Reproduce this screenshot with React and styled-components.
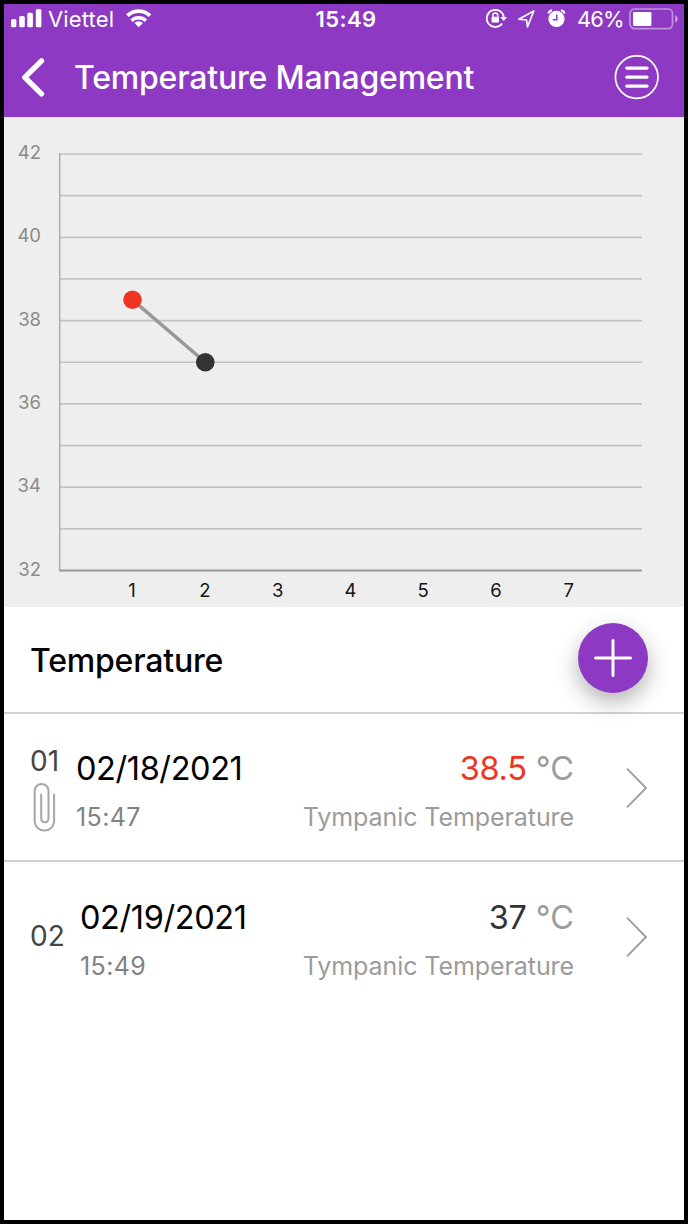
import React from "react";
import styled, { createGlobalStyle } from "styled-components";

const PURPLE = "#8d39c3";

const GlobalStyle = createGlobalStyle`
  * {
    box-sizing: border-box;
  }
  body {
    margin: 0;
    background: #fff;
    font-family: Inter, "Liberation Sans", sans-serif;
    font-kerning: normal;
  }
`;

const Screen = styled.div`
  display: flex;
  flex-direction: column;
  width: 688px;
  height: 1224px;
  border: 4px solid #000;
  background: #fff;
  overflow: hidden;
`;

const TopBar = styled.header`
  height: 113px;
  background: ${PURPLE};
  color: #fff;
`;

const StatusBar = styled.div`
  display: grid;
  grid-template-columns: 1fr auto 1fr;
  align-items: center;
  height: 30px;
  padding: 0 6px 0 7px;
  font-size: 22px;
  line-height: 30px;
`;

const StatusGroup = styled.div`
  display: flex;
  align-items: center;
  justify-content: ${props => (props.$end ? "flex-end" : "flex-start")};
  height: 30px;
`;

const Carrier = styled.span`
  width: 83px;
  padding-left: 6px;
  letter-spacing: 0.15px;
`;

const Clock = styled.span`
  padding-left: 3px;
  font-weight: 600;
  letter-spacing: 0.4px;
`;

const Percent = styled.span`
  width: 57px;
  padding-left: 5px;
  letter-spacing: -0.9px;
  white-space: nowrap;
`;

const NavBar = styled.div`
  display: flex;
  align-items: center;
  height: 83px;
  padding: 4px 24px 0 16px;
`;

const IconButton = styled.button`
  display: flex;
  flex: none;
  padding: 0;
  border: none;
  background: none;
  color: inherit;
  cursor: pointer;
`;

const Title = styled.h1`
  flex: 1;
  margin: 1px 0 0 25px;
  font-size: 32px;
  line-height: 40px;
  font-weight: 500;
  letter-spacing: -0.2px;
  white-space: nowrap;
`;

const ChartPanel = styled.section`
  height: 490px;
  background: #eee;
`;

const Chart = styled.svg`
  display: block;
`;

const AxisLabel = styled.text`
  font-size: 18.5px;
  fill: ${props => (props.$dark ? "#151515" : "#8b8b8b")};
  text-anchor: ${props => (props.$dark ? "middle" : "end")};
`;

const ListHeader = styled.div`
  display: flex;
  align-items: center;
  justify-content: space-between;
  height: 107px;
  padding: 0 36px 3px 26px;
  border-bottom: 2px solid #d3d3d3;
`;

const ListTitle = styled.h2`
  margin: 5px 0 0;
  font-size: 32px;
  line-height: 40px;
  font-weight: 500;
  letter-spacing: -0.2px;
  color: #000;
`;

const AddButton = styled(IconButton)`
  align-items: center;
  justify-content: center;
  width: 70px;
  height: 70px;
  border-radius: 50%;
  background: ${PURPLE};
  box-shadow: 0 9px 22px rgba(0, 0, 0, 0.3);
`;

const Row = styled.div`
  display: flex;
  align-items: center;
  height: 148px;
  padding: 2px 36px 0 26px;
  border-bottom: ${props => (props.$last ? "none" : "2px solid #d0d0d0")};
`;

const IndexColumn = styled.div`
  display: flex;
  flex-direction: column;
  gap: 3px;
  width: ${props => (props.$clip ? "46px" : "50px")};
  padding-bottom: ${props => (props.$clip ? "0" : "2px")};
`;

const Index = styled.span`
  font-size: 28px;
  line-height: 36px;
  color: #444;
`;

const Details = styled.div`
  display: flex;
  flex: 1;
  flex-direction: column;
  gap: 8px;
  padding: 6px 52px 0 0;
`;

const Line = styled.div`
  display: flex;
  justify-content: space-between;
  font-size: ${props => (props.$small ? "25px" : "32.5px")};
  line-height: ${props => (props.$small ? "36px" : "44px")};
  color: ${props => (props.$small ? "#9b9b9b" : "#000")};
  white-space: nowrap;
`;

const DateText = styled.span`
  letter-spacing: -0.4px;
`;

const TimeText = styled.span`
  letter-spacing: 0.4px;
  color: #828282;
`;

const Value = styled.span`
  letter-spacing: -0.3px;
  color: ${props => (props.$fever ? "#ee3524" : "#333")};
`;

const Unit = styled.span`
  color: #9b9b9b;
`;

const Method = styled.span`
  letter-spacing: -0.08px;
`;

const records = [
  { id: "01", date: "02/18/2021", time: "15:47", value: 38.5, clip: true },
  { id: "02", date: "02/19/2021", time: "15:49", value: 37, clip: false }
];

// plot area, in panel coordinates
const LEFT = 55.7;
const RIGHT = 638;
const TOP = 37;
const STEP_X = 72.8;
const STEP_Y = 41.65;

const toX = day => LEFT + day * STEP_X;
const toY = temp => TOP + (42 - temp) * STEP_Y;

const SignalIcon = () => (
  <svg width="31" height="30" fill="#fff">
    <rect x="0" y="15" width="5.4" height="8.3" rx="1.6" />
    <rect x="8.2" y="12" width="5.6" height="11.3" rx="1.6" />
    <rect x="16.3" y="8.8" width="5.6" height="14.5" rx="1.6" />
    <rect x="24.8" y="5" width="5.6" height="18.3" rx="1.6" />
  </svg>
);

const WifiIcon = () => (
  <svg width="28" height="30" fill="none" stroke="#fff">
    <path d="M2.4 11.7a16.2 16.2 0 0 1 22.6 0" strokeWidth="3.8" />
    <path d="M6.5 16.7a10.2 10.2 0 0 1 14.4 0" strokeWidth="3.4" />
    <path d="M13.7 23.2l-4.2-4.1a5.8 5.8 0 0 1 8.4 0z" fill="#fff" stroke="none" />
  </svg>
);

const RotationLockIcon = () => (
  <svg width="30" height="30" fill="none" stroke="#fff">
    <path d="M18.2 19.6A8.6 8.6 0 1 1 19.8 13" strokeWidth="1.7" />
    <path d="M16.2 13h7l-3.5 4z" fill="#fff" stroke="none" />
    <rect x="7.6" y="12.8" width="7.4" height="5.8" rx="0.8" fill="#fff" stroke="none" />
    <path d="M8.9 13.2v-1.8a2.4 2.4 0 0 1 4.8 0v1.8" strokeWidth="1.4" />
  </svg>
);

const LocationIcon = () => (
  <svg width="28" height="30" fill="none" stroke="#fff">
    <path
      d="M19.8 7L4.8 15.2l7.8.8.9 6.9z"
      strokeWidth="1.6"
      strokeLinejoin="round"
    />
  </svg>
);

const AlarmIcon = () => (
  <svg width="30" height="30" fill="none">
    <circle cx="14.5" cy="14.9" r="8.1" fill="#fff" />
    <path d="M6.6 9.6a3 3 0 0 1 3.4-3M19 6.6a3 3 0 0 1 3.4 3" stroke="#fff" strokeWidth="2.2" />
    <path d="M14.8 10.5v5.3h-4" stroke={PURPLE} strokeWidth="1.5" />
  </svg>
);

const BatteryIcon = () => (
  <svg width="49" height="30">
    <rect x="1" y="5" width="42.5" height="19.6" rx="4.5" fill="none" stroke="#fff" strokeOpacity="0.45" strokeWidth="1.7" />
    <rect x="4" y="8" width="18.4" height="14" rx="1.2" fill="#fff" />
    <path d="M46.2 11.3c3.2 1.2 3.2 6 0 7.2z" fill="#fff" fillOpacity="0.5" />
  </svg>
);

const BackIcon = () => (
  <svg width="29" height="44" fill="none" stroke="#fff">
    <path d="M21.5 4.8L4.8 21.3l16.7 16.5" strokeWidth="5.4" strokeLinecap="round" strokeLinejoin="round" />
  </svg>
);

const MenuIcon = () => (
  <svg width="46" height="46" fill="none" stroke="#fff">
    <circle cx="22.7" cy="22.1" r="21.3" strokeWidth="1.7" />
    <path d="M12.8 13.1h20.2M12.8 22.1h20.2M12.8 31.1h20.2" strokeWidth="3.3" strokeLinecap="round" />
  </svg>
);

const PlusIcon = () => (
  <svg width="40" height="40" stroke="#fff" strokeWidth="3" strokeLinecap="round">
    <path d="M20 2.5v35M2.5 20h35" />
  </svg>
);

const ClipIcon = () => (
  <svg width="30" height="52" fill="none" stroke="#a6a6a6" strokeWidth="2" strokeLinecap="round">
    <path d="M24.1 12.4v27.8a9.8 9.8 0 0 1-19.4 0V8.8a6.9 6.9 0 0 1 13.8 0v27.8a3.6 3.6 0 0 1-7.3 0V12.4" />
  </svg>
);

const ChevronIcon = () => (
  <svg width="22" height="42" fill="none" stroke="#9b9b9b" strokeWidth="1.8">
    <path d="M1 1.6L20 21 1 40.4" />
  </svg>
);

const TemperatureChart = () => (
  <Chart width="680" height="490">
    {Array.from({ length: 10 }, (_, i) => (
      <line
        key={i}
        x1={LEFT}
        x2={RIGHT}
        y1={toY(42 - i)}
        y2={toY(42 - i)}
        stroke="#c2c2c2"
        strokeWidth="1.7"
      />
    ))}
    <line x1={LEFT} x2={LEFT} y1={TOP - 1} y2={toY(32)} stroke="#adadad" strokeWidth="1.5" />
    <line x1={LEFT - 0.7} x2={RIGHT} y1={toY(32)} y2={toY(32)} stroke="#999" strokeWidth="1.8" />
    {[42, 40, 38, 36, 34, 32].map(temp => (
      <AxisLabel key={temp} x="37" y={toY(temp) + 5}>
        {temp}
      </AxisLabel>
    ))}
    {[1, 2, 3, 4, 5, 6, 7].map(day => (
      <AxisLabel $dark key={day} x={toX(day) - 0.5} y="479.5">
        {day}
      </AxisLabel>
    ))}
    <line
      x1={toX(1)}
      y1={toY(records[0].value)}
      x2={toX(2)}
      y2={toY(records[1].value)}
      stroke="#999"
      strokeWidth="3.6"
    />
    {records.map((record, i) => (
      <circle
        key={record.id}
        cx={toX(i + 1)}
        cy={toY(record.value)}
        r="9.3"
        fill={record.value > 38 ? "#ee3524" : "#333"}
      />
    ))}
  </Chart>
);

const App = () => {
  return (
    <Screen>
      <GlobalStyle />
      <TopBar>
        <StatusBar>
          <StatusGroup>
            <SignalIcon />
            <Carrier>Viettel</Carrier>
            <WifiIcon />
          </StatusGroup>
          <Clock>15:49</Clock>
          <StatusGroup $end>
            <RotationLockIcon />
            <LocationIcon />
            <AlarmIcon />
            <Percent>46%</Percent>
            <BatteryIcon />
          </StatusGroup>
        </StatusBar>
        <NavBar>
          <IconButton aria-label="Back">
            <BackIcon />
          </IconButton>
          <Title>Temperature Management</Title>
          <IconButton aria-label="Menu">
            <MenuIcon />
          </IconButton>
        </NavBar>
      </TopBar>
      <ChartPanel>
        <TemperatureChart />
      </ChartPanel>
      <ListHeader>
        <ListTitle>Temperature</ListTitle>
        <AddButton aria-label="Add">
          <PlusIcon />
        </AddButton>
      </ListHeader>
      {records.map((record, i) => (
        <Row key={record.id} $last={i === records.length - 1}>
          <IndexColumn $clip={record.clip}>
            <Index>{record.id}</Index>
            {record.clip && <ClipIcon />}
          </IndexColumn>
          <Details>
            <Line>
              <DateText>{record.date}</DateText>
              <span>
                <Value $fever={record.value > 38}>{record.value}</Value>{" "}
                <Unit>°C</Unit>
              </span>
            </Line>
            <Line $small>
              <TimeText>{record.time}</TimeText>
              <Method>Tympanic Temperature</Method>
            </Line>
          </Details>
          <ChevronIcon />
        </Row>
      ))}
    </Screen>
  );
};

export default App;
